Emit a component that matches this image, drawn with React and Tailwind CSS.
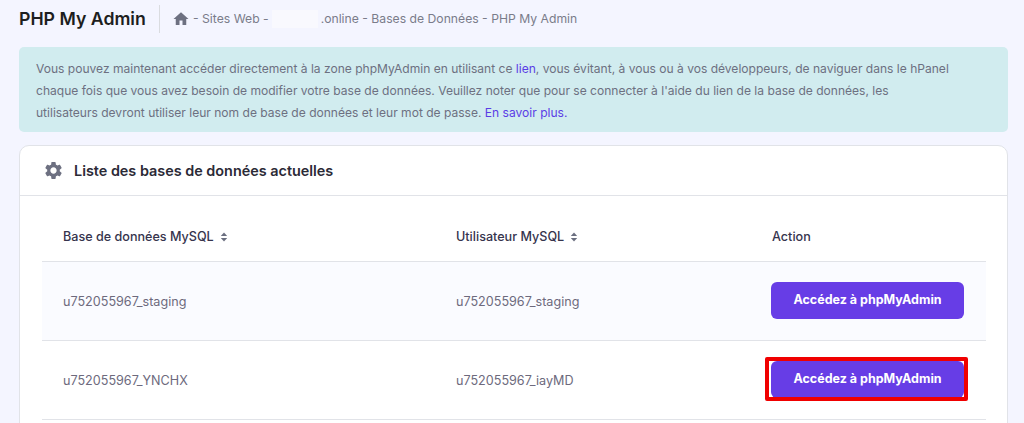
import { MdHome, MdSettings } from "react-icons/md"

const font = "font-['Inter','Liberation_Sans',sans-serif]"

const SortIcon = () => (
  <svg width="8" height="10" viewBox="0 0 8 10" className="ml-[6px] shrink-0" fill="#6b6f80">
    <path d="M4 0.5 7.2 4H0.8z" />
    <path d="M4 9.5 0.8 6h6.4z" />
  </svg>
)

const AccessButton = ({ highlighted }) => (
  <div className="relative mb-[2px] w-[193px]">
    <button className="flex h-[37px] w-full items-center justify-center rounded-[6px] bg-[#673de6] text-[12.5px] font-bold text-white">
      Accédez à phpMyAdmin
    </button>
    {highlighted ? (
      <div className="absolute -top-[4px] -right-[4px] -bottom-[3px] -left-[6px] rounded-[2px] border-[4px] border-[#f00000]" />
    ) : null}
  </div>
)

const rows = [
  { db: "u752055967_staging", user: "u752055967_staging", tone: "bg-[#fafbff]" },
  { db: "u752055967_YNCHX", user: "u752055967_iayMD", tone: "bg-white", highlighted: true },
]

export default function App() {
  return (
    <div className={`${font} h-[423px] overflow-hidden bg-[#f4f5ff] pt-[4px] pr-[16px] pl-[19px]`}>
      <div className="flex h-[30px] items-center">
        <h1 className="w-[140px] text-[17.7px] font-semibold text-[#1d1e20]">PHP My Admin</h1>
        <div className="h-[28px] w-px bg-[#dadce0]" />
        <div className="ml-[12px] flex items-center text-[12.2px] text-[#7a7c8a]">
          <MdHome className="mr-[3px] text-[#6d7081]" size={18} />
          <span>- Sites Web -</span>
          <span className="mx-[3px] h-[18px] w-[46px] bg-[#f9f9fe]" />
          <span>.online - Bases de Données - PHP My Admin</span>
        </div>
      </div>

      <div className="mt-[13px] h-[85px] rounded-[5px] bg-[#d1ecef] px-[17px] py-[11px] text-[12.05px] leading-[22px] text-[#6d7081]">
        <p>
          Vous pouvez maintenant accéder directement à la zone phpMyAdmin en utilisant ce{" "}
          <span className="text-[#5b3de6]">lien</span>, vous évitant, à vous ou à vos développeurs, de naviguer dans le hPanel
          <br />
          chaque fois que vous avez besoin de modifier votre base de données. Veuillez noter que pour se connecter à l'aide du lien de la base de données, les
          <br />
          utilisateurs devront utiliser leur nom de base de données et leur mot de passe.{" "}
          <span className="text-[#5b3de6]">En savoir plus.</span>
        </p>
      </div>

      <div className="mt-[13px] h-[300px] rounded-[10px] border border-[#e1e3e8] bg-white">
        <div className="flex h-[50px] items-center border-b border-[#e1e3e8] pl-[23px]">
          <MdSettings className="text-[#6d7081]" size={21} />
          <h2 className="ml-[10px] text-[14.4px] font-semibold text-[#2b2a36]">Liste des bases de données actuelles</h2>
        </div>

        <div className="mr-[21px] ml-[22px]">
          <div className="flex h-[66px] items-center border-b border-[#e1e3e8] pt-[18px] text-[12.6px] font-medium text-[#36344d]">
            <div className="flex w-[414px] items-center pl-[21px]">
              Base de données MySQL
              <SortIcon />
            </div>
            <div className="flex w-[315px] items-center">
              Utilisateur MySQL
              <SortIcon />
            </div>
            <div className="pl-px">Action</div>
          </div>

          {rows.map((row) => (
            <div key={row.db} className={`flex h-[79px] items-center border-b border-[#e1e3e8] text-[12.6px] text-[#6d6a7d] ${row.tone}`}>
              <div className="w-[414px] pt-[3px] pl-[21px]">{row.db}</div>
              <div className="w-[315px] pt-[3px]">{row.user}</div>
              <AccessButton highlighted={row.highlighted} />
            </div>
          ))}
        </div>
      </div>
    </div>
  )
}
